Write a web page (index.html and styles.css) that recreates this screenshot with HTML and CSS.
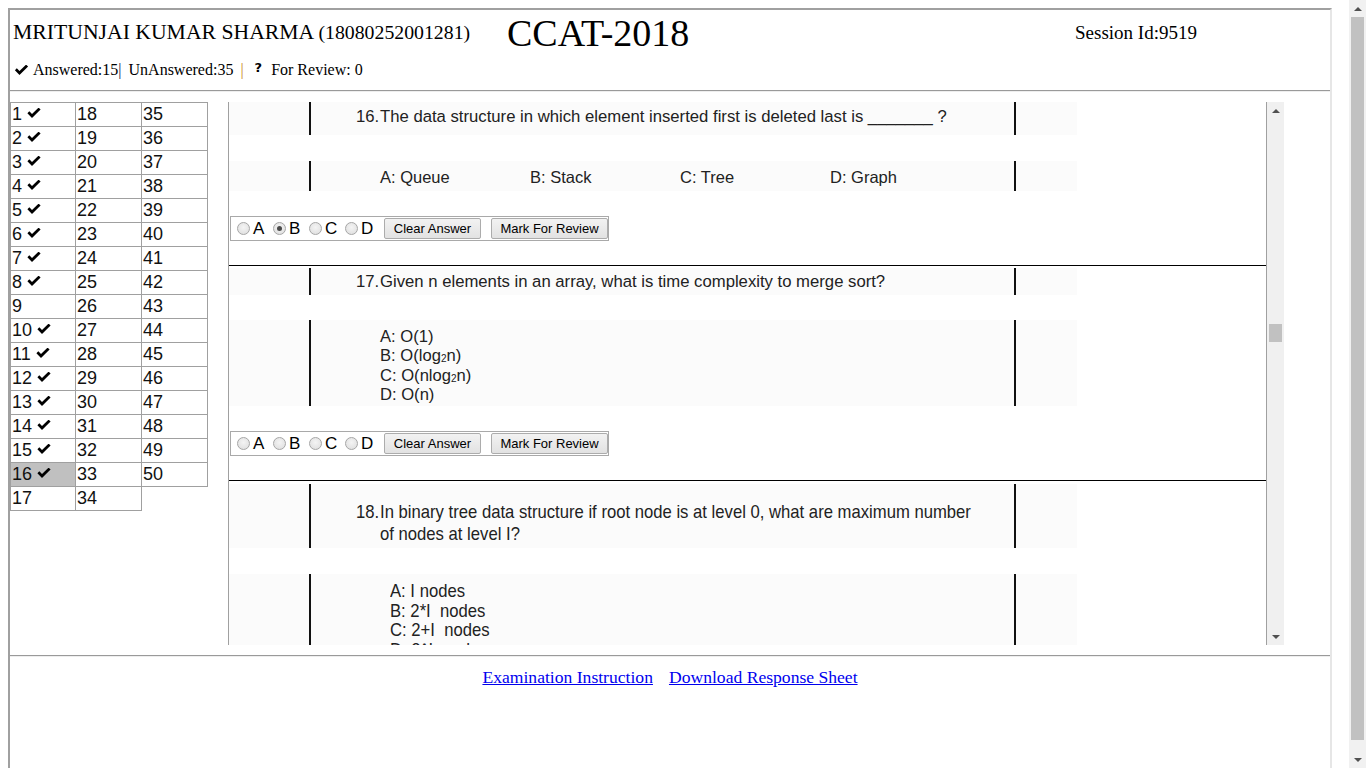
FILE: index.html
```html
<!DOCTYPE html>
<html>
<head>
<meta charset="utf-8">
<title>CCAT-2018</title>
<link rel="stylesheet" href="styles.css">
</head>
<body>
<div class="page">
  <div class="frame">
    <div class="head">
      <div class="head-row">
        <div class="cand">MRITUNJAI KUMAR SHARMA <span class="regno">(18080252001281)</span></div>
        <div class="exam">CCAT-2018</div>
        <div class="session">Session Id:9519</div>
      </div>
      <div class="stats">
        <svg class="ok ok-head" viewBox="0 0 14 10"><path d="M0.4 5.2 L2.3 3.3 L5 6 L11.6 -0.4 L13.6 1.6 L5 10 Z"/></svg><span class="st-ans">Answered:15</span><span class="sep-a">|</span><span class="st-un">UnAnswered:35</span><span class="sep-b">|</span><span class="qmark">?</span><span class="st-rev">For Review: 0</span>
      </div>
    </div>
    <div class="rule"></div>
    <div class="main">
      <table class="qnav">
        <colgroup><col class="c1"><col class="c2"><col class="c3"></colgroup>
        <tr><td>1 <svg class="ok" viewBox="0 0 14 10"><path d="M0.4 5.2 L2.3 3.3 L5 6 L11.6 -0.4 L13.6 1.6 L5 10 Z"/></svg></td><td>18</td><td>35</td></tr>
        <tr><td>2 <svg class="ok" viewBox="0 0 14 10"><path d="M0.4 5.2 L2.3 3.3 L5 6 L11.6 -0.4 L13.6 1.6 L5 10 Z"/></svg></td><td>19</td><td>36</td></tr>
        <tr><td>3 <svg class="ok" viewBox="0 0 14 10"><path d="M0.4 5.2 L2.3 3.3 L5 6 L11.6 -0.4 L13.6 1.6 L5 10 Z"/></svg></td><td>20</td><td>37</td></tr>
        <tr><td>4 <svg class="ok" viewBox="0 0 14 10"><path d="M0.4 5.2 L2.3 3.3 L5 6 L11.6 -0.4 L13.6 1.6 L5 10 Z"/></svg></td><td>21</td><td>38</td></tr>
        <tr><td>5 <svg class="ok" viewBox="0 0 14 10"><path d="M0.4 5.2 L2.3 3.3 L5 6 L11.6 -0.4 L13.6 1.6 L5 10 Z"/></svg></td><td>22</td><td>39</td></tr>
        <tr><td>6 <svg class="ok" viewBox="0 0 14 10"><path d="M0.4 5.2 L2.3 3.3 L5 6 L11.6 -0.4 L13.6 1.6 L5 10 Z"/></svg></td><td>23</td><td>40</td></tr>
        <tr><td>7 <svg class="ok" viewBox="0 0 14 10"><path d="M0.4 5.2 L2.3 3.3 L5 6 L11.6 -0.4 L13.6 1.6 L5 10 Z"/></svg></td><td>24</td><td>41</td></tr>
        <tr><td>8 <svg class="ok" viewBox="0 0 14 10"><path d="M0.4 5.2 L2.3 3.3 L5 6 L11.6 -0.4 L13.6 1.6 L5 10 Z"/></svg></td><td>25</td><td>42</td></tr>
        <tr><td>9</td><td>26</td><td>43</td></tr>
        <tr><td>10 <svg class="ok" viewBox="0 0 14 10"><path d="M0.4 5.2 L2.3 3.3 L5 6 L11.6 -0.4 L13.6 1.6 L5 10 Z"/></svg></td><td>27</td><td>44</td></tr>
        <tr><td>11 <svg class="ok" viewBox="0 0 14 10"><path d="M0.4 5.2 L2.3 3.3 L5 6 L11.6 -0.4 L13.6 1.6 L5 10 Z"/></svg></td><td>28</td><td>45</td></tr>
        <tr><td>12 <svg class="ok" viewBox="0 0 14 10"><path d="M0.4 5.2 L2.3 3.3 L5 6 L11.6 -0.4 L13.6 1.6 L5 10 Z"/></svg></td><td>29</td><td>46</td></tr>
        <tr><td>13 <svg class="ok" viewBox="0 0 14 10"><path d="M0.4 5.2 L2.3 3.3 L5 6 L11.6 -0.4 L13.6 1.6 L5 10 Z"/></svg></td><td>30</td><td>47</td></tr>
        <tr><td>14 <svg class="ok" viewBox="0 0 14 10"><path d="M0.4 5.2 L2.3 3.3 L5 6 L11.6 -0.4 L13.6 1.6 L5 10 Z"/></svg></td><td>31</td><td>48</td></tr>
        <tr><td>15 <svg class="ok" viewBox="0 0 14 10"><path d="M0.4 5.2 L2.3 3.3 L5 6 L11.6 -0.4 L13.6 1.6 L5 10 Z"/></svg></td><td>32</td><td>49</td></tr>
        <tr><td class="current">16 <svg class="ok" viewBox="0 0 14 10"><path d="M0.4 5.2 L2.3 3.3 L5 6 L11.6 -0.4 L13.6 1.6 L5 10 Z"/></svg></td><td>33</td><td>50</td></tr>
        <tr><td>17</td><td>34</td></tr>
      </table>

      <div class="pane">
        <div class="pane-body">
          <!-- Question 16 -->
          <div class="qimg q16-q">
            <div class="qframe">
              <div class="qtext"><span class="qno">16.</span>The data structure in which element inserted first is deleted last is _______ ?</div>
            </div>
          </div>
          <div class="qimg q16-o">
            <div class="qframe">
              <div class="opts-row"><span>A: Queue</span><span>B: Stack</span><span>C: Tree</span><span>D: Graph</span></div>
            </div>
          </div>
          <div class="answer">
            <label class="opt"><span class="radio"></span>A</label>
            <label class="opt"><span class="radio checked"></span>B</label>
            <label class="opt"><span class="radio"></span>C</label>
            <label class="opt"><span class="radio"></span>D</label>
            <button class="btn btn-clear">Clear Answer</button>
            <button class="btn btn-mark">Mark For Review</button>
          </div>
          <div class="qsep"></div>

          <!-- Question 17 -->
          <div class="qimg q17-q">
            <div class="qframe">
              <div class="qtext"><span class="qno">17.</span>Given n elements in an array, what is time complexity to merge sort?</div>
            </div>
          </div>
          <div class="qimg q17-o">
            <div class="qframe">
              <div class="opts-col">
                <div>A: O(1)</div>
                <div>B: O(log<sub>2</sub>n)</div>
                <div>C: O(nlog<sub>2</sub>n)</div>
                <div>D: O(n)</div>
              </div>
            </div>
          </div>
          <div class="answer">
            <label class="opt"><span class="radio"></span>A</label>
            <label class="opt"><span class="radio"></span>B</label>
            <label class="opt"><span class="radio"></span>C</label>
            <label class="opt"><span class="radio"></span>D</label>
            <button class="btn btn-clear">Clear Answer</button>
            <button class="btn btn-mark">Mark For Review</button>
          </div>
          <div class="qsep"></div>

          <!-- Question 18 -->
          <div class="qimg q18-q">
            <div class="qframe">
              <div class="narrow-q">
                <div class="squeeze"><span class="qno-n">18.</span>In binary tree data structure if root node is at level 0, what are maximum number<br>of nodes at level I?</div>
              </div>
            </div>
          </div>
          <div class="qimg q18-o">
            <div class="qframe">
              <div class="narrow-o">
                <div class="squeeze">
                  <div>A: I nodes</div>
                  <div>B: 2*I&nbsp; nodes</div>
                  <div>C: 2+I&nbsp; nodes</div>
                  <div>D: 2^I&nbsp; nodes</div>
                </div>
              </div>
            </div>
          </div>
        </div>
        <div class="pane-sb">
          <div class="sb-btn"><span class="tri-up"></span></div>
          <div class="sb-track"><div class="sb-thumb pane-thumb"></div></div>
          <div class="sb-btn"><span class="tri-down"></span></div>
        </div>
      </div>
    </div>
    <div class="rule"></div>
    <div class="links">
      <a href="#">Examination Instruction</a>
      <a href="#">Download Response Sheet</a>
    </div>
  </div>

  <div class="vscroll">
    <div class="sb-btn"><span class="tri-up"></span></div>
    <div class="sb-track"><div class="sb-thumb page-thumb"></div></div>
    <div class="sb-btn"><span class="tri-down"></span></div>
  </div>
</div>
</body>
</html>
```

FILE: styles.css
```css
html, body {
  margin: 0;
  padding: 0;
  background: #fff;
}
body {
  width: 1366px;
  height: 768px;
  overflow: hidden;
  font-family: "Liberation Serif", "Times New Roman", serif;
  color: #000;
}
.page {
  display: flex;
  height: 768px;
}
.frame {
  margin: 8px 0 0 8px;
  width: 1320px;
  height: 780px;
  border-style: solid;
  border-width: 2px;
  border-color: #a0a0a0 #e6e6e6 #e6e6e6 #a0a0a0;
  overflow: hidden;
  flex: none;
}

/* ---------- header ---------- */
.head {
  height: 80px;
}
.head-row {
  display: grid;
  grid-template-columns: 497px 568px auto;
  height: 50px;
}
.cand {
  padding: 10px 0 0 3px;
  font-size: 21.7px;
  line-height: 25px;
  white-space: nowrap;
}
.regno {
  font-size: 19.8px;
}
.exam {
  padding-top: 2px;
  font-size: 38px;
  line-height: 42px;
}
.session {
  padding-top: 11px;
  font-size: 19px;
  line-height: 24px;
}
.stats {
  display: flex;
  align-items: center;
  height: 20px;
  padding-left: 4px;
  font-size: 16px;
  line-height: 20px;
  white-space: nowrap;
}
.ok {
  display: inline-block;
  width: 14px;
  height: 10px;
  fill: #000;
  vertical-align: 2px;
}
.ok-head {
  width: 15px;
  height: 10px;
  margin-right: 4px;
  flex: none;
}
.sep-a {
  color: #1a1a40;
  margin-right: 7px;
}
.sep-b {
  color: #c98a1a;
  margin-left: 7px;
}
.qmark {
  margin: 0 9px 0 11px;
  font-family: "DejaVu Sans", sans-serif;
  font-weight: bold;
  font-size: 13px;
  position: relative;
  top: -2px;
}

.rule {
  height: 0;
  border-top: 1px solid #9a9a9a;
  border-bottom: 1px solid #eeeeee;
}

/* ---------- main ---------- */
.main {
  display: flex;
  align-items: flex-start;
  margin: 10px 0;
  height: 543px;
}
.qnav {
  border-collapse: collapse;
  table-layout: fixed;
  width: 198px;
  font-family: "Liberation Sans", Arial, sans-serif;
  font-size: 18px;
  color: #111;
}
.qnav col.c1 { width: 65px; }
.qnav col.c2 { width: 66px; }
.qnav col.c3 { width: 66px; }
.qnav td {
  border: 1px solid #a0a0a0;
  padding: 0 1px;
  height: 23px;
  line-height: 23px;
  white-space: nowrap;
}
.qnav td.current {
  background: #c0c0c0;
}

.pane {
  display: flex;
  margin-left: 20px;
  height: 543px;
  border-left: 1px solid #a0a0a0;
}
.pane-body {
  width: 1037px;
  height: 543px;
  overflow: hidden;
}
.pane-sb {
  display: flex;
  flex-direction: column;
  width: 17px;
  border-left: 1px solid #a0a0a0;
  background: #f0f0f0;
}
.sb-btn {
  height: 17px;
  display: flex;
  align-items: center;
  justify-content: center;
  flex: none;
}
.sb-track {
  flex: 1;
}
.sb-thumb {
  background: #c1c1c1;
  margin: 0 2px;
}
.pane-thumb {
  margin-top: 205px;
  height: 18px;
}
.tri-up {
  width: 0;
  height: 0;
  border-left: 4px solid transparent;
  border-right: 4px solid transparent;
  border-bottom: 4px solid #505050;
}
.tri-down {
  width: 0;
  height: 0;
  border-left: 4px solid transparent;
  border-right: 4px solid transparent;
  border-top: 4px solid #505050;
}

/* question images */
.qimg {
  width: 848px;
  background: #fbfbfb;
  box-sizing: border-box;
}
.qframe {
  margin-left: 80px;
  width: 703px;
  height: 100%;
  border-left: 2px solid #111;
  border-right: 2px solid #111;
  box-sizing: content-box;
}
.qtext {
  padding-left: 69px;
  text-indent: -24px;
  padding-right: 10px;
  font-family: "Liberation Sans", Arial, sans-serif;
  font-size: 16.7px;
  line-height: 20px;
  color: #222;
  white-space: nowrap;
}
.qno {
  display: inline-block;
  width: 24px;
  text-indent: 0;
}
.opts-row {
  display: flex;
  padding-left: 69px;
  font-family: "Liberation Sans", Arial, sans-serif;
  font-size: 16.5px;
  line-height: 20px;
  color: #222;
}
.opts-row span {
  width: 150px;
}
.opts-col {
  padding-left: 69px;
  font-family: "Liberation Sans", Arial, sans-serif;
  font-size: 16.6px;
  line-height: 19.5px;
  color: #222;
}
.opts-col sub {
  font-size: 10px;
  vertical-align: -1px;
  line-height: 0;
}

/* condensed question (rendered as narrow type in the original image) */
.narrow-q,
.narrow-o {
  font-family: "Liberation Sans", Arial, sans-serif;
  font-size: 19px;
  color: #222;
  white-space: nowrap;
}
.narrow-q {
  padding: 17px 0 0 45px;
  line-height: 22px;
}
.narrow-o {
  padding: 7px 0 0 79px;
  line-height: 19.5px;
}
.squeeze {
  transform: scaleX(0.877);
  transform-origin: 0 0;
}
.narrow-q .squeeze {
  padding-left: 27.4px;
  text-indent: -27.4px;
}
.qno-n {
  display: inline-block;
  width: 27.4px;
  text-indent: 0;
}

.q16-q { height: 33px; }
.q16-q .qtext { padding-top: 5px; }
.q16-o { height: 30px; margin-top: 26px; }
.q16-o .opts-row { padding-top: 6px; }
.q17-q { height: 27px; margin-top: 2px; }
.q17-q .qtext { padding-top: 4px; }
.q17-o { height: 86px; margin-top: 25px; }
.q17-o .opts-col { padding-top: 6.5px; }
.q18-q { height: 64px; margin-top: 3px; }
.q18-o { height: 120px; margin-top: 26px; }

/* answer bar */
.answer {
  display: flex;
  width: max-content;
  align-items: center;
  margin: 25px 0 0 1px;
  height: 23px;
  padding: 0 0 0 6px;
  border: 1px solid #a9a9a9;
  font-family: "Liberation Sans", Arial, sans-serif;
  font-size: 17px;
  color: #000;
}
.answer + .qsep { margin-top: 24px; }
.opt {
  display: inline-flex;
  align-items: center;
  width: 36px;
  line-height: 20px;
}
.radio {
  width: 11px;
  height: 11px;
  margin-right: 3px;
  border: 1px solid #a6a6a6;
  border-radius: 50%;
  background: radial-gradient(circle at 50% 40%, #f4f4f4 0%, #dcdcdc 100%);
  box-sizing: content-box;
  position: relative;
  flex: none;
}
.radio.checked::after {
  content: "";
  position: absolute;
  left: 3px;
  top: 3px;
  width: 5px;
  height: 5px;
  border-radius: 50%;
  background: #4a4a4a;
}
.btn {
  box-sizing: border-box;
  height: 21px;
  padding: 0;
  font-family: "Liberation Sans", Arial, sans-serif;
  font-size: 13px;
  color: #000;
  border: 1px solid #acacac;
  border-radius: 2px;
  background: linear-gradient(#f2f2f2, #e2e2e2);
  text-align: center;
}
.btn-clear { margin-left: 3px; width: 97px; }
.btn-mark { margin-left: 10px; width: 117px; }
.qsep {
  height: 1px;
  background: #000;
  width: 1037px;
}

/* footer links */
.links {
  display: flex;
  justify-content: center;
  gap: 16px;
  padding: 10px 0 0 0;
  font-size: 17.6px;
  line-height: 20px;
}
.links a {
  color: #0000ee;
  text-decoration: underline;
}

/* page scrollbar */
.vscroll {
  margin-left: auto;
  width: 17px;
  height: 768px;
  display: flex;
  flex-direction: column;
  background: #f1f1f1;
}
.page-thumb {
  height: 723px;
}
```
